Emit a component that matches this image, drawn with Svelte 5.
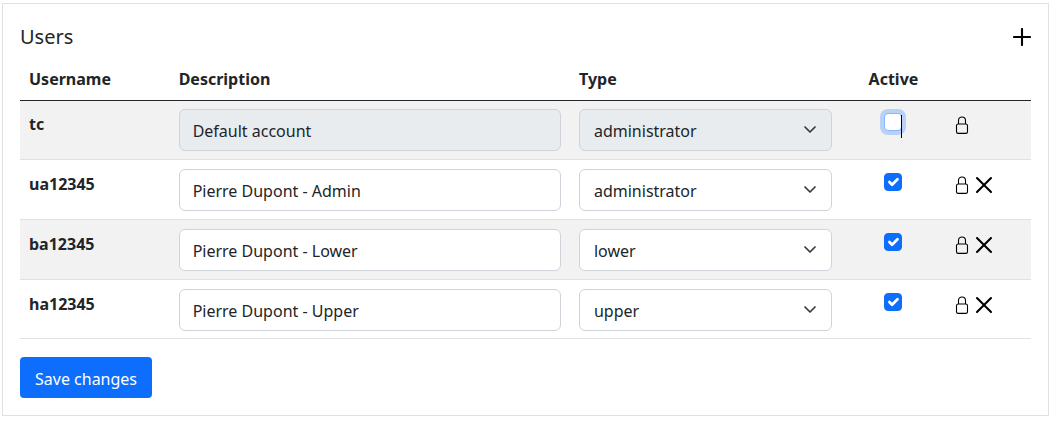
<script>
  let users = $state([
    { name: 'tc', description: 'Default account', type: 'administrator', active: false, locked: true },
    { name: 'ua12345', description: 'Pierre Dupont - Admin', type: 'administrator', active: true, locked: false },
    { name: 'ba12345', description: 'Pierre Dupont - Lower', type: 'lower', active: true, locked: false },
    { name: 'ha12345', description: 'Pierre Dupont - Upper', type: 'upper', active: true, locked: false }
  ]);
  const types = ['administrator', 'lower', 'upper'];
</script>

<form class="card" onsubmit={(e) => e.preventDefault()}>
  <header>
    <h1>Users</h1>
    <button type="button" class="icon" aria-label="Add user">
      <svg width="18" height="18" viewBox="0 0 18 18"><path d="M9 1v16M1 9h16" stroke="#000" stroke-width="2.1" stroke-linecap="round" /></svg>
    </button>
  </header>

  <table>
    <colgroup>
      <col class="c-name" /><col class="c-desc" /><col class="c-type" /><col class="c-active" /><col />
    </colgroup>
    <thead>
      <tr>
        <th scope="col">Username</th>
        <th scope="col">Description</th>
        <th scope="col">Type</th>
        <th scope="col" class="center">Active</th>
        <td></td>
      </tr>
    </thead>
    <tbody>
      {#each users as user (user.name)}
        <tr>
          <th scope="row">{user.name}</th>
          <td>
            <input class="control" type="text" aria-label="Description of {user.name}" bind:value={user.description} disabled={user.locked} />
          </td>
          <td>
            <div class="select">
              <select class="control" aria-label="Type of {user.name}" bind:value={user.type} disabled={user.locked}>
                {#each types as type}<option value={type}>{type}</option>{/each}
              </select>
              <svg class="chevron" width="12" height="12" viewBox="0 0 12 12"><path d="m1 3 5 5 5-5" fill="none" stroke="#343a40" stroke-width="1.7" stroke-linecap="round" stroke-linejoin="round" /></svg>
            </div>
          </td>
          <td class="center">
            <span class="check" class:focused={user.locked}>
              <input type="checkbox" aria-label="{user.name} active" bind:checked={user.active} />
              {#if user.active}
                <svg width="18" height="18" viewBox="0 0 20 20"><path d="m6 10 3 3 6-6" fill="none" stroke="#fff" stroke-width="3" stroke-linecap="round" stroke-linejoin="round" /></svg>
              {/if}
              {#if user.locked}<span class="caret"></span>{/if}
            </span>
          </td>
          <td>
            <div class="actions">
              <button type="button" class="icon" aria-label="Change password of {user.name}">
                <svg width="14" height="18" viewBox="0 0 14 18"><path d="M3.5 8V4.500C3.500 2 5 1 7 1s3.500 1 3.500 3.500V8M3.200 8h7.600q1.700 0 1.700 1.700v6q0 1.700-1.700 1.700H3.200q-1.700 0-1.700-1.700v-6q0-1.700 1.700-1.700z" fill="none" stroke="#000" stroke-width="1.1" /></svg>
              </button>
              {#if !user.locked}
                <button type="button" class="icon" aria-label="Delete {user.name}">
                  <svg width="18" height="18" viewBox="0 0 18 18"><path d="m2 2 14 14M16 2 2 16" stroke="#000" stroke-width="2.1" stroke-linecap="round" /></svg>
                </button>
              {/if}
            </div>
          </td>
        </tr>
      {/each}
    </tbody>
  </table>

  <button type="submit" class="save">Save changes</button>
</form>

<style>
  :global(body) { background: #fff; }
  .card {
    margin: 3px 3px 4px 2px;
    padding: 17px;
    border: 1px solid #dee2e6;
    color: #212529;
    font: 16px/26px "Noto Sans", "Open Sans", sans-serif;
  }
  header { display: flex; justify-content: space-between; align-items: center; height: 32px; }
  h1 { margin: 0; font-size: 20px; line-height: 32px; font-weight: 400; }
  .icon { display: block; padding: 0; border: 0; background: none; cursor: pointer; }
  svg { display: block; }
  table { width: 100%; table-layout: fixed; border-collapse: separate; border-spacing: 0; }
  .c-name { width: 14.8%; }
  .c-desc { width: 39.6%; }
  .c-type { width: 26.8%; }
  .c-active { width: 10.4%; }
  th, td { padding: 9px 9px 8px; text-align: left; vertical-align: top; font-weight: 400; }
  th { font-weight: 700; }
  thead th, thead td { padding: 13px 9px 8px; }
  tbody th { padding-top: 11px; }
  tbody th, tbody td { border-bottom: 1px solid #dee2e6; }
  tbody tr:nth-child(odd) { background: #f2f2f2; }
  tbody tr:first-child > * { border-top: 1px solid #212529; padding-top: 8px; }
  tbody tr:first-child > th { padding-top: 10px; }
  tbody tr:last-child > * { padding-bottom: 7px; }
  th.center, td.center { text-align: center; }
  .control {
    display: block;
    box-sizing: border-box;
    width: 100%;
    height: 42px;
    margin: 0;
    padding: 2px 14px 0;
    border: 1px solid #ced4da;
    border-radius: 6px;
    background: #fff;
    color: #212529;
    font: inherit;
    appearance: none;
    opacity: 1;
  }
  input.control { padding: 2px 13px 0; }
  .control:disabled { background: #e9ecef; }
  .select { position: relative; }
  .chevron { position: absolute; right: 16px; top: 15px; pointer-events: none; }
  .check { position: relative; display: block; width: 18px; height: 18px; margin: 4px auto 0; }
  .check input {
    display: block;
    appearance: none;
    box-sizing: border-box;
    width: 18px;
    height: 18px;
    margin: 0;
    border: 1px solid #bfbfbf;
    border-radius: 4px;
    background: #fff;
  }
  .check input:checked { border-color: #0d6efd; background: #0d6efd; }
  .focused input { border-color: #86b7fe; box-shadow: 0 0 0 4px rgba(13, 110, 253, 0.25); }
  .check svg { position: absolute; inset: 0; pointer-events: none; }
  .caret { position: absolute; left: 17px; top: 2px; width: 1px; height: 23px; background: #000; }
  .actions { display: flex; gap: 6px; padding-top: 7px; }
  .save {
    margin-top: 18px;
    padding: 9px 15px 6px;
    border: 0;
    border-radius: 4px;
    background: #0d6efd;
    color: #fff;
    font: inherit;
    cursor: pointer;
  }
</style>
